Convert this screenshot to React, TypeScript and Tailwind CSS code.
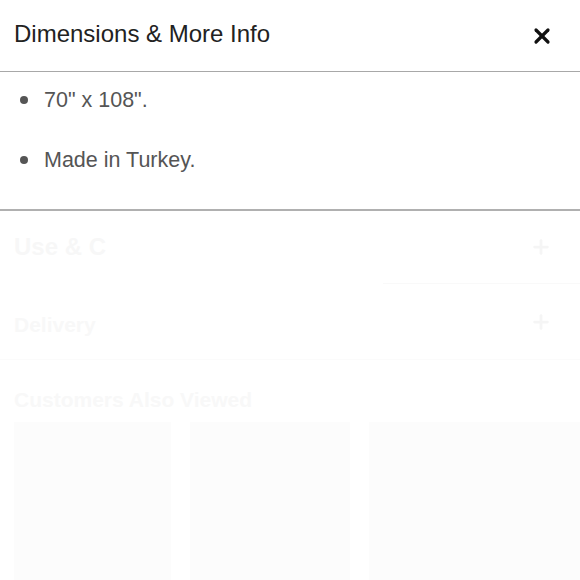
import { X, Plus } from 'lucide-react'

const details = ['70" x 108".', 'Made in Turkey.']

export default function App() {
  return (
    <div className="w-[580px] h-[580px] overflow-hidden bg-white font-['Liberation_Sans',Arial,sans-serif]">
      {/* Header */}
      <div className="h-[72px] flex items-center justify-between pl-[14px] pr-[26px] border-b border-[#a8a8a8]">
        <h2 className="text-[24px] text-[#222] leading-none -mt-[3px]">Dimensions &amp; More Info</h2>
        <X size={24} strokeWidth={3.2} className="text-[#111]" />
      </div>

      {/* Details */}
      <ul className="flex flex-col gap-[4px] pb-[21px] border-b-2 border-[#b0b0b0]">
        {details.map((d) => (
          <li key={d} className="h-[56px] flex items-center pl-[20px] text-[21.5px] text-[#555]">
            <span className="w-[8px] h-[8px] rounded-full bg-[#555] mr-[16px]" />
            {d}
          </li>
        ))}
      </ul>

      {/* Faded background content */}
      <div className="flex items-center justify-between h-[72px] pl-[14px] pr-[28px]">
        <span className="text-[24px] font-bold text-[#f7f7f7]">Use &amp; C</span>
        <Plus size={22} strokeWidth={3} className="text-[#f5f5f5]" />
      </div>
      <div className="ml-[383px] h-px bg-[#f9f9f9]" />
      <div className="flex items-center justify-between h-[76px] pl-[14px] pr-[28px] border-b border-[#fbfbfb]">
        <span className="text-[21px] font-bold text-[#f8f8f8] mt-[6px]">Delivery</span>
        <Plus size={22} strokeWidth={3} className="text-[#f5f5f5]" />
      </div>
      <div className="pt-[24px] pl-[14px]">
        <div className="text-[21px] font-bold text-[#f8f8f8]">Customers Also Viewed</div>
        <div className="flex gap-[19px] mt-[6px]">
          <div className="w-[157px] h-[170px] shrink-0 bg-[#fcfcfc]" />
          <div className="w-[160px] h-[170px] shrink-0 bg-[#fcfcfc]" />
          <div className="w-[212px] h-[170px] shrink-0 bg-[#fcfcfc]" />
        </div>
      </div>
    </div>
  )
}
